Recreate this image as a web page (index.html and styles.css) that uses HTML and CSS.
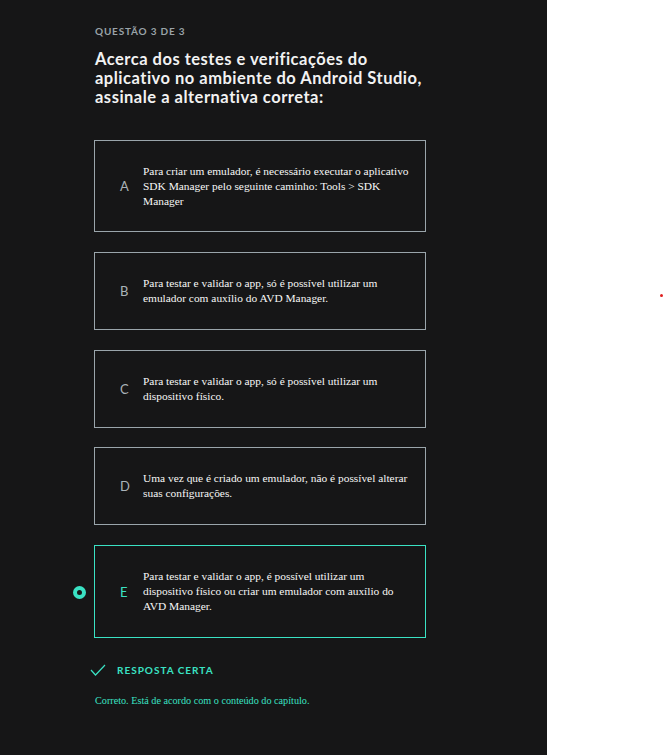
FILE: index.html
```html
<!DOCTYPE html>
<html lang="pt">
<head>
<meta charset="utf-8">
<link rel="stylesheet" href="styles.css">
</head>
<body>
<div class="panel">
  <div class="content">
    <div class="qnum">QUESTÃO 3 DE 3</div>
    <h1 class="title">Acerca dos testes e verificações do aplicativo no ambiente do Android Studio, assinale a alternativa correta:</h1>
    <div class="options">
      <div class="option tall">
        <span class="letter">A</span>
        <p class="text">Para criar um emulador, é necessário executar o aplicativo SDK Manager pelo seguinte caminho: Tools &gt; SDK Manager</p>
      </div>
      <div class="option">
        <span class="letter">B</span>
        <p class="text">Para testar e validar o app, só é possível utilizar um emulador com auxílio do AVD Manager.</p>
      </div>
      <div class="option">
        <span class="letter">C</span>
        <p class="text">Para testar e validar o app, só é possível utilizar um dispositivo físico.</p>
      </div>
      <div class="option">
        <span class="letter">D</span>
        <p class="text">Uma vez que é criado um emulador, não é possível alterar suas configurações.</p>
      </div>
      <div class="option tall selected">
        <span class="radio"></span>
        <span class="letter">E</span>
        <p class="text">Para testar e validar o app, é possível utilizar um dispositivo físico ou criar um emulador com auxílio do AVD Manager.</p>
      </div>
    </div>
    <div class="result">
      <svg class="check" width="16" height="12" viewBox="0 0 16 12"><path d="M1 6 L5.5 11 L15 1" fill="none" stroke="#3ae2c4" stroke-width="1.2"/></svg>
      <span>RESPOSTA CERTA</span>
    </div>
    <p class="feedback">Correto. Está de acordo com o conteúdo do capítulo.</p>
  </div>
</div>
<span class="dot"></span>
</body>
</html>
```
FILE: styles.css
```css
* { box-sizing: border-box; }
html, body { margin: 0; padding: 0; background: #fff; }
body { width: 665px; height: 755px; overflow: hidden; position: relative; }
.panel { width: 547px; height: 755px; background: #161617; }
.content { padding: 25px 0 0 94px; width: 426px; }
.qnum {
  font-family: Lato, "Liberation Sans", sans-serif;
  font-weight: 700; font-size: 10px; letter-spacing: 0.8px;
  color: #9aa3a8; padding-left: 1px; line-height: 12px;
}
.title {
  margin: 13px 0 0 1px;
  font-family: Lato, "Liberation Sans", sans-serif;
  font-weight: 700; font-size: 16.5px; line-height: 19px;
  color: #f2f2f2; letter-spacing: 0.5px;
}
.options { margin-top: 33px; display: flex; flex-direction: column; gap: 19.75px; }
.option {
  position: relative;
  height: 78px; border: 1px solid #9aa5ab;
  display: flex; align-items: center;
  padding-left: 25px;
}
.option.tall { height: 92px; }
.option.selected { border-color: #3ae2c4; height: 93px; }
.letter {
  font-family: Lato, "Liberation Sans", sans-serif;
  font-size: 13px; color: #aab3b8; width: 23px; flex: none;
}
.selected .letter { color: #3ae2c4; }
.text {
  margin: 0; font-family: "Liberation Serif", serif;
  font-size: 11.4px; line-height: 15px; color: #f6f6f6;
  padding-right: 10px;
}
.radio {
  position: absolute; left: -22px; top: 40px;
  width: 13px; height: 13px; border-radius: 50%;
  border: 4px solid #3ae2c4; background: #161617;
}
.result {
  margin-top: 26px; display: flex; align-items: center; gap: 11px;
  font-family: Lato, "Liberation Sans", sans-serif; font-weight: 700;
  font-size: 10px; letter-spacing: 1px; color: #3ae2c4;
  margin-left: -4px;
}
.feedback {
  margin: 19px 0 0 1px; font-family: "Liberation Serif", serif;
  font-size: 10.2px; color: #3ae2c4;
}
.dot { position: absolute; left: 660px; top: 294px; width: 3px; height: 3px; background: #e02020; border-radius: 50%; }
```
